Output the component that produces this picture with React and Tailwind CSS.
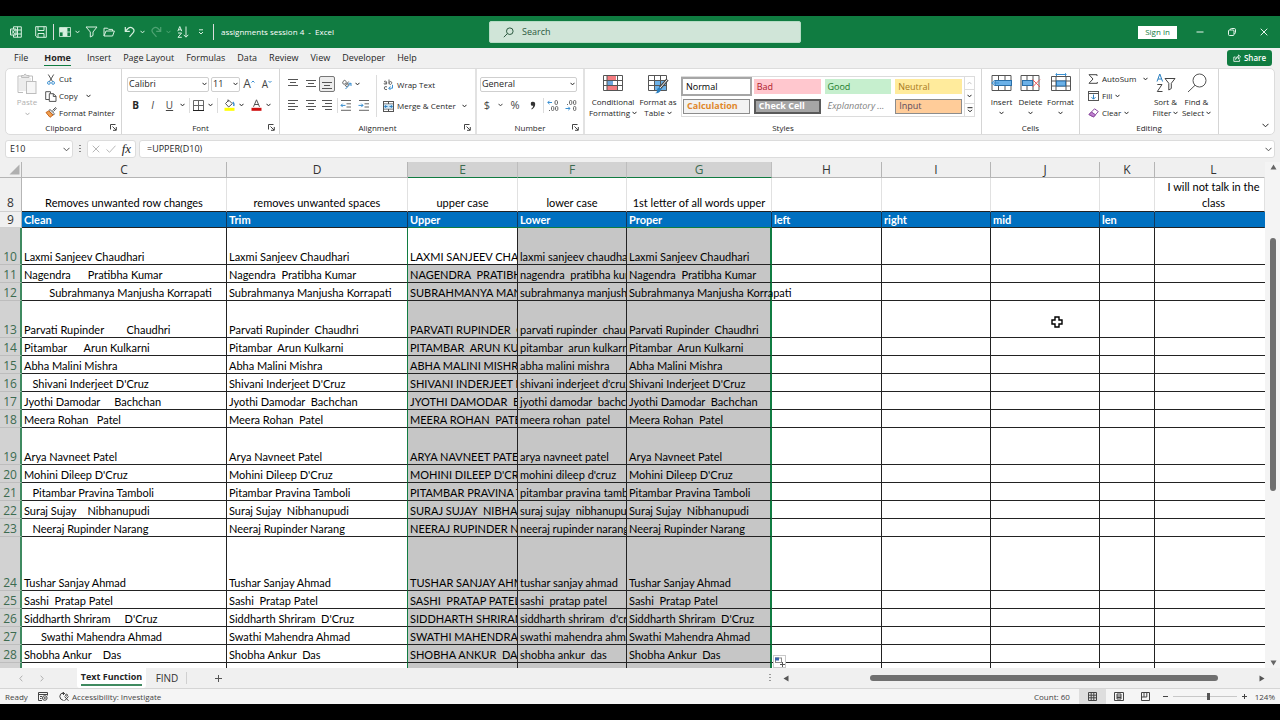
import React, { useState } from 'react';
import clsx from 'clsx';

// Column layout, the last one takes whatever is left
const columns = [
  { id: 'C', width: 'w-[205px]', title: 'Clean', note: 'Removes unwanted row changes' },
  { id: 'D', width: 'w-[181px]', title: 'Trim', note: 'removes unwanted spaces' },
  { id: 'E', width: 'w-[110px]', title: 'Upper', note: 'upper case' },
  { id: 'F', width: 'w-[109px]', title: 'Lower', note: 'lower case' },
  { id: 'G', width: 'w-[145px]', title: 'Proper', note: '1st letter of all words upper' },
  { id: 'H', width: 'w-[110px]', title: 'left', note: '' },
  { id: 'I', width: 'w-[109px]', title: 'right', note: '' },
  { id: 'J', width: 'w-[109px]', title: 'mid', note: '' },
  { id: 'K', width: 'w-[55px]', title: 'len', note: '' },
  { id: 'L', width: '', title: '', note: 'I will not talk in the class' },
];

const rows = [
  { n: 10, h: 'h-[37px]', clean: 'Laxmi Sanjeev Chaudhari', trim: 'Laxmi Sanjeev Chaudhari' },
  { n: 11, h: 'h-[18px]', clean: 'Nagendra      Pratibha Kumar', trim: 'Nagendra  Pratibha Kumar' },
  { n: 12, h: 'h-[18px]', clean: '         Subrahmanya Manjusha Korrapati', trim: 'Subrahmanya Manjusha Korrapati' },
  { n: 13, h: 'h-[37px]', clean: 'Parvati Rupinder        Chaudhri', trim: 'Parvati Rupinder  Chaudhri' },
  { n: 14, h: 'h-[18px]', clean: 'Pitambar      Arun Kulkarni', trim: 'Pitambar  Arun Kulkarni' },
  { n: 15, h: 'h-[18px]', clean: 'Abha Malini Mishra', trim: 'Abha Malini Mishra' },
  { n: 16, h: 'h-[18px]', clean: "   Shivani Inderjeet D'Cruz", trim: "Shivani Inderjeet D'Cruz" },
  { n: 17, h: 'h-[18px]', clean: 'Jyothi Damodar     Bachchan', trim: 'Jyothi Damodar  Bachchan' },
  { n: 18, h: 'h-[18px]', clean: 'Meera Rohan   Patel', trim: 'Meera Rohan  Patel' },
  { n: 19, h: 'h-[37px]', clean: 'Arya Navneet Patel', trim: 'Arya Navneet Patel' },
  { n: 20, h: 'h-[18px]', clean: "Mohini Dileep D'Cruz", trim: "Mohini Dileep D'Cruz" },
  { n: 21, h: 'h-[18px]', clean: '   Pitambar Pravina Tamboli', trim: 'Pitambar Pravina Tamboli' },
  { n: 22, h: 'h-[18px]', clean: 'Suraj Sujay    Nibhanupudi', trim: 'Suraj Sujay  Nibhanupudi' },
  { n: 23, h: 'h-[18px]', clean: '   Neeraj Rupinder Narang', trim: 'Neeraj Rupinder Narang' },
  { n: 24, h: 'h-[54px]', clean: 'Tushar Sanjay Ahmad', trim: 'Tushar Sanjay Ahmad' },
  { n: 25, h: 'h-[18px]', clean: 'Sashi  Pratap Patel', trim: 'Sashi  Pratap Patel' },
  { n: 26, h: 'h-[18px]', clean: "Siddharth Shriram     D'Cruz", trim: "Siddharth Shriram  D'Cruz" },
  { n: 27, h: 'h-[18px]', clean: '      Swathi Mahendra Ahmad', trim: 'Swathi Mahendra Ahmad' },
  { n: 28, h: 'h-[18px]', clean: 'Shobha Ankur    Das', trim: 'Shobha Ankur  Das' },
  { n: '', h: 'h-[18px]', clean: '', trim: '' },
];

const menuTabs = ['File', 'Home', 'Insert', 'Page Layout', 'Formulas', 'Data', 'Review', 'View', 'Developer', 'Help'];

const cellStyles = [
  { name: 'Normal', cls: 'bg-white text-black outline-2 outline-[#a6a6a6]' },
  { name: 'Bad', cls: 'bg-[#ffc7ce] text-[#b0182a]' },
  { name: 'Good', cls: 'bg-[#c6efce] text-[#1b7a2a]' },
  { name: 'Neutral', cls: 'bg-[#ffeb9c] text-[#a97a1c]' },
  { name: 'Calculation', cls: 'bg-[#f2f2f2] text-[#e0882c] font-bold border border-[#8c8c8c]' },
  { name: 'Check Cell', cls: 'bg-[#a5a5a5] text-white font-bold border-2 border-[#5a5a5a]' },
  { name: 'Explanatory ...', cls: 'bg-white text-[#7f7f7f] italic' },
  { name: 'Input', cls: 'bg-[#ffcc99] text-[#5b4a5e] border border-[#8c8c8c]' },
];

// Basic line icon
const Icon = ({ w = 12, h = w, children, className = '', sw = 1 }) => (
  <svg
    width={w}
    height={h}
    viewBox={`0 0 ${w} ${h}`}
    fill="none"
    stroke="currentColor"
    strokeWidth={sw}
    className={clsx('shrink-0', className)}
    aria-hidden="true"
  >
    {children}
  </svg>
);

const Chevron = ({ className = '' }) => (
  <Icon w={5} h={4} className={className}>
    <path d="M.5 .8 2.5 2.9 4.5 .8" />
  </Icon>
);

const Divider = ({ className = '' }) => <span className={clsx('w-px shrink-0 bg-[#dcdcdc]', className)} />;

const ToolButton = ({ label, className = '', children }) => (
  <button type="button" aria-label={label} className={clsx('flex h-4 shrink-0 items-center justify-center', className)}>
    {children}
  </button>
);

// Lines used by all the alignment buttons
const Lines = ({ rows: lines }) => (
  <Icon w={12} h={12} className="text-[#555]">
    {lines.map(([x1, x2, y]) => (
      <path key={y} d={`M${x1} ${y}H${x2}`} />
    ))}
  </Icon>
);

const Group = ({ title, className, launcher, children }) => (
  <section className={clsx('flex shrink-0 flex-col', className)}>
    <div className="flex h-[52px]">{children}</div>
    <div className="flex h-[13px] items-center">
      <span className="w-4" />
      <span className="flex-1 text-center text-[8px] leading-3">{title}</span>
      <span className="flex w-4 justify-center">
        {launcher && (
          <button type="button" aria-label={`${title} settings`}>
            <Icon w={7} className="text-[#444]">
              <path d="M.5 5.5V.5H5.5M2.5 2.5 6 6M6.3 3V6.3H3" />
            </Icon>
          </button>
        )}
      </span>
    </div>
  </section>
);

const TitleBar = () => (
  <header className="flex h-8 shrink-0 items-center bg-[#107c41] text-[#d8f0e0]">
    <div className="flex w-[489px] shrink-0 items-center">
      <div className="flex w-[32px] justify-center">
        <Icon w={12}>
          <path d="M3.5 3V.8H11.3V11.2H3.5V9M7.5 .8V11.2M3.5 4H11.3M3.5 8H11.3" />
          <path d="M.5 3H6V9H.5ZM2 4.3 4.6 7.7M4.6 4.3 2 7.7" />
        </Icon>
      </div>
      <ToolButton label="Save" className="ml-[2px] w-[14px]">
        <Icon w={12}>
          <path d="M.7 .7H11.3V11.3H2L.7 10ZM3 .7V4.5H9V.7M3 11.3V7.5H9V11.3" />
        </Icon>
      </ToolButton>
      <Divider className="ml-[5px] h-4 bg-[#6db78b]" />
      <ToolButton label="Quick layout" className="ml-1 w-[22px] gap-1">
        <Icon w={12}>
          <path d="M.5 1.5H11.5V10.5H.5ZM4 1.5V10.5M8 1.5V10.5M.5 6H11.5" strokeWidth=".8" />
          <path d="M4.5 2H7.5V5.5H4.5ZM1 2H3.5V5.5H1ZM4.5 6.5H7.5V10H4.5Z" fill="currentColor" />
        </Icon>
        <Chevron />
      </ToolButton>
      <ToolButton label="Filter" className="ml-[3px] w-4">
        <Icon w={13} h={12}>
          <path d="M1 1H12L8 6V9.5L5.3 11V6Z" />
        </Icon>
      </ToolButton>
      <ToolButton label="Open" className="ml-[3px] w-[14px]">
        <Icon w={12} h={10}>
          <path d="M1 9V1.2H4.5L5.7 2.4H9.5V4M1 9 3 4H11.4L9.6 9Z" />
        </Icon>
      </ToolButton>
      <ToolButton label="Undo" className="ml-[6px] w-[24px] gap-1">
        <Icon w={12} h={12} sw={1.2}>
          <path d="M1.3 1V5.3H5.8M1.3 5.2 4 2.5C7-.2 11.5 3 9.4 6.4L5.5 10.8" />
        </Icon>
        <Chevron />
      </ToolButton>
      <ToolButton label="Redo" className="ml-[3px] w-[23px] gap-1 text-[#4fa373]">
        <Icon w={12} h={12} sw={1.2}>
          <path d="M10.7 1V5.3H6.2M10.7 5.2 8 2.5C5-.2.5 3 2.6 6.4L6.5 10.8" />
        </Icon>
        <Chevron />
      </ToolButton>
      <ToolButton label="Sort" className="ml-[3px] w-4">
        <Icon w={12} h={12}>
          <path d="M.8 5.2 2.8 .5 4.8 5.2M1.5 3.8H4.2M1 7H4.6L1 11.3H4.8M9 .5V11M6.7 8.8 9 11.2 11.3 8.8" />
        </Icon>
      </ToolButton>
      <ToolButton label="Customize toolbar" className="ml-[2px] w-4">
        <Icon w={6} h={6}>
          <path d="M1 .8H5M1 3 3 5 5 3" />
        </Icon>
      </ToolButton>
      <Divider className="ml-1 h-4 bg-[#6db78b]" />
      <span className="ml-[7px] whitespace-pre text-[8px] text-white">assignments session 4  -  Excel</span>
    </div>
    <label className="flex h-[22px] w-[312px] items-center rounded-[2px] border border-[#b5dcc4] bg-[#d0e5d8] pl-[13px] text-[#2c5a40]">
      <Icon w={11}>
        <circle cx="6.8" cy="4.2" r="3.3" />
        <path d="M4.4 6.6 .8 10.2" />
      </Icon>
      <input
        aria-label="Search"
        placeholder="Search"
        className="ml-2 min-w-0 flex-1 bg-transparent text-[9px] outline-none placeholder:text-[#2c5a40]"
      />
    </label>
    <button type="button" className="ml-auto h-[13px] w-[39px] bg-white text-[8px] leading-3 text-[#107c41]">
      Sign in
    </button>
    <div className="flex text-[#e6f5ec]">
      <ToolButton label="Minimize" className="ml-[7px] w-8">
        <Icon w={8}>
          <path d="M.5 4H7.5" />
        </Icon>
      </ToolButton>
      <ToolButton label="Restore" className="w-8">
        <Icon w={8}>
          <rect x=".5" y="2" width="5.5" height="5.5" rx="1" />
          <path d="M2.3 2V1.5Q2.3.5 3.5.5H6.3Q7.5.5 7.5 1.7V4.5Q7.5 5.7 6.3 5.7" />
        </Icon>
      </ToolButton>
      <ToolButton label="Close" className="w-8">
        <Icon w={8}>
          <path d="M.7.7 7.3 7.3M7.3.7.7 7.3" />
        </Icon>
      </ToolButton>
    </div>
  </header>
);

const MenuBar = () => (
  <nav className="flex h-5 shrink-0 items-center pl-[14px] pr-[8px]">
    <div className="flex gap-3 text-[9px]">
      {menuTabs.map((tab) => (
        <button
          key={tab}
          type="button"
          className={clsx('h-4 border-b leading-4', tab === 'Home' ? 'mx-1 border-[#107c41] font-bold' : 'border-transparent')}
        >
          {tab}
        </button>
      ))}
    </div>
    <button
      type="button"
      className="ml-auto flex h-4 w-[45px] items-center justify-center gap-[3px] rounded-[3px] bg-[#107c41] text-[8px] font-semibold text-white"
    >
      <Icon w={8}>
        <path d="M2.5 3H.8V7.4H6.6V5.5M2.6 5.5C2.6 3.5 4 2.4 5.5 2.4V.8L7.6 3 5.5 5V3.5C4.2 3.5 3.2 4 2.6 5.5Z" strokeWidth=".8" />
      </Icon>
      Share
    </button>
  </nav>
);

const ClipboardGroup = () => (
  <Group title="Clipboard" launcher className="w-[115px]">
    <button type="button" className="ml-[9px] flex w-[24px] flex-col items-center pt-1 text-[8px] leading-3 text-[#b0b0b0]">
      <Icon w={20} h={22}>
        <path d="M6 19.5H1V3H4.5M12 3H15.5V8" fill="none" stroke="#bdbdbd" />
        <path d="M4.5 4.5V2.5H6.5Q8 -.5 9.8 2.5H12V4.5Z" fill="#e2e2e2" stroke="#bdbdbd" />
        <path d="M2 5H14V8H9V18H2Z" fill="#ececec" stroke="none" />
        <rect x="9.5" y="8.5" width="9.5" height="12" fill="#f6f6f6" stroke="#bdbdbd" />
      </Icon>
      <span className="mt-px">Paste</span>
      <Chevron className="mt-1" />
    </button>
    <div className="ml-[6px] flex flex-col pt-[2px] text-[8px]">
      <button type="button" className="flex h-[17px] items-center gap-[2px]">
        <span className="flex w-3 justify-center">
          <Icon w={8} h={11}>
            <path d="M1.3 .5 5.5 7.5M6.7 .5 2.5 7.5" stroke="#555" />
            <circle cx="1.9" cy="8.9" r="1.4" stroke="#3a8fd0" />
            <circle cx="6.1" cy="8.9" r="1.4" stroke="#3a8fd0" />
          </Icon>
        </span>
        Cut
      </button>
      <button type="button" className="flex h-[17px] items-center gap-[2px]">
        <span className="flex w-3 justify-center">
          <Icon w={12} h={11} className="text-[#555]">
            <path d="M4 8.5H.7V.7H5.5V2.4M4.3 2.7H8.5L11 5.2V10.4H4.3ZM8.3 2.7V5.5H11" />
          </Icon>
        </span>
        Copy
        <Chevron className="ml-[6px]" />
      </button>
      <button type="button" className="flex h-[17px] items-center gap-[2px] whitespace-nowrap">
        <span className="flex w-3 justify-center">
          <Icon w={12} h={11}>
            <path d="M7.5 3.5 10.5 .5 11.3 1.3 8.5 4.5" stroke="#555" />
            <path d="M5 2.5 9.5 6.8 8.3 8 3.8 3.7Z" fill="#fff" stroke="#555" />
            <path d="M3.8 4 1 5.5 5 10.3 8 8Z" fill="#f0a050" stroke="#c8651b" />
          </Icon>
        </span>
        Format Painter
      </button>
    </div>
  </Group>
);

const FontGroup = () => (
  <Group title="Font" launcher className="w-[158px] border-l border-[#d5d5d5]">
    <div className="flex flex-col pl-[5px]">
      <div className="flex h-[30px] items-center">
        <Dropdown label="Font name" value="Calibri" className="w-[82px]" />
        <Dropdown label="Font size" value="11" className="ml-[2px] w-[29px]" />
        <ToolButton label="Grow font" className="ml-[2px] w-[14px] text-[12px] text-[#444]">
          A
          <Icon w={4} h={8} className="text-[#3a8fd0]">
            <path d="M.5 2.5 2 1 3.5 2.5" />
          </Icon>
        </ToolButton>
        <ToolButton label="Shrink font" className="ml-1 w-[14px] text-[10px] text-[#444]">
          A
          <Icon w={4} h={8} className="text-[#3a8fd0]">
            <path d="M.5 1 2 2.5 3.5 1" />
          </Icon>
        </ToolButton>
      </div>
      <div className="flex h-3 items-center text-[10px]">
        <ToolButton label="Bold" className="w-[17px] font-bold">B</ToolButton>
        <ToolButton label="Italic" className="w-[17px] italic text-[#444]">I</ToolButton>
        <ToolButton label="Underline" className="w-[17px] text-[#444] underline">U</ToolButton>
        <Chevron className="ml-[2px]" />
        <Divider className="ml-1 h-[15px]" />
        <ToolButton label="Borders" className="ml-[2px] w-3">
          <Icon w={11} className="text-[#666]">
            <path d="M.5 .5H10.5V10.5H.5ZM5.5 .5V10.5M.5 5.5H10.5" />
            <path d="M0 10.5H11" stroke="#222" />
          </Icon>
        </ToolButton>
        <Chevron className="ml-1" />
        <Divider className="ml-1 h-[15px]" />
        <ToolButton label="Fill color" className="ml-[5px] w-3">
          <Icon w={11} h={12}>
            <path d="M1.5 4.5 4.8 1.2 8.3 4.7 4.7 8 1.5 4.5Z M4 .5V3" stroke="#555" />
            <path d="M8.8 3Q10.6 5 9.6 7" stroke="#3a8fd0" strokeWidth="1.4" />
            <path d="M.5 10.3H10.5" stroke="#ffff00" strokeWidth="3" />
          </Icon>
        </ToolButton>
        <Chevron className="ml-1" />
        <ToolButton label="Font color" className="ml-[6px] w-3">
          <Icon w={11} h={12}>
            <path d="M2.5 7.8 5.5 .8 8.5 7.8M3.6 5.5H7.4" stroke="#555" />
            <path d="M.5 10.3H10.5" stroke="#d01010" strokeWidth="3" />
          </Icon>
        </ToolButton>
        <Chevron className="ml-1" />
      </div>
    </div>
  </Group>
);

const Dropdown = ({ label, value, className }) => (
  <span className={clsx('flex h-[15px] items-center rounded-[2px] border border-[#cfcfcf] bg-white pl-px pr-px', className)}>
    <select aria-label={label} className="min-w-0 flex-1 appearance-none bg-transparent text-[9px] leading-3 outline-none">
      <option>{value}</option>
    </select>
    <Chevron />
  </span>
);

const AlignmentGroup = () => (
  <Group title="Alignment" launcher className="w-[196px] border-l border-[#d5d5d5]">
    <div className="flex flex-col pl-[4px]">
      <div className="flex h-[30px] items-center">
        <ToolButton label="Top align" className="w-[18px]">
          <Lines rows={[[1, 11, 1.5], [3, 9, 4.5], [1, 11, 7.5]]} />
        </ToolButton>
        <ToolButton label="Middle align" className="w-[17px]">
          <Lines rows={[[1, 11, 2.5], [3, 9, 5.5], [1, 11, 8.5]]} />
        </ToolButton>
        <ToolButton label="Bottom align" className="w-4 rounded-[2px] border border-[#777] bg-[#ededed]">
          <Lines rows={[[1, 11, 4.5], [3, 9, 7.5], [1, 11, 10.5]]} />
        </ToolButton>
        <ToolButton label="Orientation" className="ml-[5px] w-3">
          <Icon w={11}>
            <path d="M2 2.5Q4-.3 5 2.5T2.5 5.2Q1 4 2 2.5M4 7 7.7 2.5M5.5 5Q8 4 7.3 6.3T4.6 7" stroke="#666" />
            <path d="M4.5 10 10 4.3M7.5 4.3H10V7" stroke="#3a8fd0" />
          </Icon>
        </ToolButton>
        <Chevron className="ml-[3px]" />
      </div>
      <div className="flex h-3 items-center">
        <ToolButton label="Align left" className="w-[18px]">
          <Lines rows={[[1, 11, 1.5], [1, 8, 4.5], [1, 11, 7.5], [1, 8, 10.5]]} />
        </ToolButton>
        <ToolButton label="Center" className="w-[17px]">
          <Lines rows={[[1, 11, 1.5], [3, 9, 4.5], [1, 11, 7.5], [3, 9, 10.5]]} />
        </ToolButton>
        <ToolButton label="Align right" className="w-4">
          <Lines rows={[[1, 11, 1.5], [4, 11, 4.5], [1, 11, 7.5], [4, 11, 10.5]]} />
        </ToolButton>
        <Divider className="ml-[2px] h-[15px]" />
        <ToolButton label="Decrease indent" className="ml-[2px] w-3">
          <Icon w={12} h={11} className="text-[#666]">
            <path d="M1 .5H11M6.5 3.8H11M6.5 7H11M1 10.3H11" />
            <path d="M5.5 5.4H1M2.7 3.7 1 5.4 2.7 7.1" stroke="#3a8fd0" />
          </Icon>
        </ToolButton>
        <ToolButton label="Increase indent" className="ml-[6px] w-3">
          <Icon w={12} h={11} className="text-[#666]">
            <path d="M1 .5H11M6.5 3.8H11M6.5 7H11M1 10.3H11" />
            <path d="M.5 5.4H5M3.3 3.7 5 5.4 3.3 7.1" stroke="#3a8fd0" />
          </Icon>
        </ToolButton>
      </div>
    </div>
    <Divider className="ml-[6px] mt-[6px] h-[42px]" />
    <div className="flex flex-col pl-[6px] text-[8px]">
      <button type="button" className="flex h-[31px] items-center gap-[3px] whitespace-nowrap">
        <Icon w={11} h={12}>
          <path d="M1 2.5Q3 1.3 3.6 3V5.2M3.6 4Q1 3.6 1 4.6T3.6 4.8M6 .5V5.2M6 3.8Q6.3 2.3 7.8 2.6T8.6 4.6 6 4.6M4 7.8Q1.2 7 1.2 9T4 10.6" stroke="#666" />
          <path d="M9.5 5.8V9.2H5.8M7.5 7.4 5.7 9.2 7.5 11" stroke="#3a8fd0" />
        </Icon>
        Wrap Text
      </button>
      <button type="button" className="flex h-3 items-center gap-[3px] whitespace-nowrap">
        <Icon w={11}>
          <rect x=".5" y=".5" width="10" height="10" stroke="#555" />
          <path d="M.5 3H10.5M.5 8H10.5M5.5 .5V3M5.5 8V10.5" stroke="#555" />
          <rect x="1" y="3.4" width="9" height="4.2" fill="#cde6f7" stroke="none" />
          <path d="M1.5 5.5H4.5M3.2 4.2 1.7 5.5 3.2 6.8M9.5 5.5H6.5M7.8 4.2 9.3 5.5 7.8 6.8" stroke="#2a7fc0" />
        </Icon>
        Merge &amp; Center
        <Chevron className="ml-[3px]" />
      </button>
    </div>
  </Group>
);

const NumberGroup = () => (
  <Group title="Number" launcher className="w-[108px] border-l-2 border-[#e2e2e2]">
    <div className="flex flex-col pl-[3px]">
      <div className="flex h-[30px] items-center">
        <Dropdown label="Number format" value="General" className="w-[97px]" />
      </div>
      <div className="flex h-3 items-center text-[11px] text-[#444]">
        <ToolButton label="Currency" className="w-[14px]">$</ToolButton>
        <Chevron className="ml-1" />
        <ToolButton label="Percent" className="ml-[5px] w-[14px]">%</ToolButton>
        <ToolButton label="Comma style" className="ml-[5px] w-3">
          <Icon w={6} h={9}>
            <path d="M3 .8A2 2 0 1 0 3.3 4.7Q3 6.7 1.3 7.7L1.8 8.4Q5.3 6.5 5.2 2.8A2.1 2.1 0 0 0 3 .8Z" fill="#333" stroke="none" />
          </Icon>
        </ToolButton>
        <Divider className="ml-1 h-[15px]" />
        <ToolButton label="Increase decimal" className="ml-[3px] w-3">
          <Icon w={12} h={11}>
            <path d="M5 2.5H.8M2.5.8.8 2.5 2.5 4.2" stroke="#3a8fd0" />
            <rect x="8" y=".5" width="2.5" height="4" rx="1.2" stroke="#666" />
            <rect x="4.5" y="6.5" width="2.3" height="4" rx="1.1" stroke="#666" />
            <rect x="8.5" y="6.5" width="2.3" height="4" rx="1.1" stroke="#666" />
            <path d="M2 10.5H3" stroke="#666" />
          </Icon>
        </ToolButton>
        <ToolButton label="Decrease decimal" className="ml-[6px] w-3">
          <Icon w={12} h={11}>
            <path d="M.5 8.5H5M3.3 6.8 5 8.5 3.3 10.2" stroke="#3a8fd0" />
            <rect x="4.5" y=".5" width="2.3" height="4" rx="1.1" stroke="#666" />
            <rect x="8.5" y=".5" width="2.3" height="4" rx="1.1" stroke="#666" />
            <rect x="8.5" y="6.5" width="2.3" height="4" rx="1.1" stroke="#666" />
            <path d="M2 4.5H3" stroke="#666" />
          </Icon>
        </ToolButton>
      </div>
    </div>
  </Group>
);

// Tall ribbon button: picture, text and a chevron after or under the text
const BigButton = ({ lines, below, className, children }) => (
  <button type="button" className={clsx('flex flex-col items-center whitespace-nowrap pt-[6px] text-[8px] leading-[11px]', className)}>
    <span className="flex h-[21px] items-start">{children}</span>
    <span>{lines[0]}</span>
    {below ? (
      <Chevron className="mt-1" />
    ) : (
      <span className="flex items-center gap-[2px]">
        {lines[1]}
        <Chevron />
      </span>
    )}
  </button>
);

const StylesGroup = () => (
  <Group title="Styles" className="w-[398px] border-l-2 border-[#e2e2e2]">
    <BigButton lines={['Conditional', 'Formatting']} className="ml-1 w-[48px]">
      <Icon w={20} h={17}>
        <rect x="4" y=".5" width="9" height="5" fill="#f47c80" stroke="none" />
        <rect x="4" y="5.5" width="6" height="5" fill="#6ea6dc" stroke="none" />
        <rect x="4" y="10.5" width="11" height="5" fill="#f47c80" stroke="none" />
        <path d="M.5 .5H19.5V15.5H.5ZM4 .5V15.5M14.5 .5V15.5M.5 5.5H19.5M.5 10.5H19.5" stroke="#555" />
      </Icon>
    </BigButton>
    <BigButton lines={['Format as', 'Table']} className="w-[42px]">
      <Icon w={21} h={19}>
        <rect x="7" y="5" width="12" height="11" fill="#6bb1e8" stroke="none" />
        <path d="M.5 .5H18.5V15.5H.5ZM6.5 .5V15.5M12.5 .5V15.5M.5 5.5H18.5M.5 10.5H18.5" stroke="#555" />
        <path d="M19.5 4.5 12 13" stroke="#444" strokeWidth="3" />
        <path d="M19.5 4.5 12 13" stroke="#fff" />
        <path d="M12 12.5Q9 12.5 9 15.5T6.5 18Q12 19 13.5 14Z" fill="#2a7fc0" stroke="none" />
      </Icon>
    </BigButton>
    <div className="ml-[2px] mt-[7px] flex h-[41px] w-[294px] border border-[#dcdcdc]">
      <div className="grid flex-1 grid-cols-4 gap-x-1 gap-y-[4px] p-[2px] pl-px">
        {cellStyles.map((s) => (
          <button key={s.name} type="button" className={clsx('flex h-[15px] items-center overflow-hidden whitespace-nowrap pl-[3px] text-[9px]', s.cls)}>
            {s.name}
          </button>
        ))}
      </div>
      <div className="flex w-[10px] flex-col divide-y divide-[#dcdcdc] border-l border-[#dcdcdc]">
        <button type="button" aria-label="Previous styles" className="flex flex-1 items-center justify-center text-[#c4c4c4]">
          <Chevron className="rotate-180" />
        </button>
        <button type="button" aria-label="Next styles" className="flex flex-1 items-center justify-center">
          <Chevron />
        </button>
        <button type="button" aria-label="All styles" className="flex flex-1 items-center justify-center">
          <Icon w={6} h={6}>
            <path d="M.5 .7H5.5M1 2.8 3 4.8 5 2.8" />
          </Icon>
        </button>
      </div>
    </div>
  </Group>
);

const CellsGroup = () => (
  <Group title="Cells" className="w-[98px] border-l border-[#d5d5d5]">
    <BigButton below lines={['Insert']} className="ml-[5px] w-[29px]">
      <Icon w={21} h={17}>
        <path d="M1 .5H20V15.5H1ZM7.5 .5V15.5M14 .5V15.5" stroke="#555" />
        <rect x="4" y="5.5" width="16.5" height="5" fill="#6bb1e8" stroke="#2a6fa8" />
        <path d="M8 8H.8M3.8 5 .8 8 3.8 11" stroke="#3a8fd0" />
      </Icon>
    </BigButton>
    <BigButton below lines={['Delete']} className="w-[29px]">
      <Icon w={21} h={17}>
        <path d="M1 .5H19V15.5H1ZM7 .5V15.5M13 .5V15.5" stroke="#555" />
        <rect x="2.5" y="5.5" width="10" height="5" fill="#6bb1e8" stroke="#2a6fa8" />
        <path d="M12.5 4.5 20 12M20 4.5 12.5 12" stroke="#e8585c" />
      </Icon>
    </BigButton>
    <BigButton below lines={['Format']} className="w-[31px]">
      <Icon w={20} h={19} className="-mt-[2px]">
        <path d="M4.5 1.5H15.5M5.5 .2V3M14.5 .2V3" stroke="#3a8fd0" />
        <path d="M.5 3.5H19.5V17.5H.5ZM5 3.5V17.5M15 3.5V17.5M.5 8H19.5M.5 13H19.5" stroke="#555" />
        <rect x="5.5" y="8" width="9" height="5" fill="#6bb1e8" stroke="#2a6fa8" />
      </Icon>
    </BigButton>
  </Group>
);

const EditingGroup = () => (
  <Group title="Editing" className="w-[139px] border-l border-[#d5d5d5]">
    <div className="ml-[8px] flex w-[60px] flex-col pt-[2px] text-[8px]">
      <button type="button" className="flex h-[17px] items-center gap-1">
        <Icon w={10} className="text-[#444]">
          <path d="M9 2V.7H1L5 5 1 9.3H9.3V8" />
        </Icon>
        AutoSum
        <Chevron className="ml-auto" />
      </button>
      <button type="button" className="flex h-[17px] items-center gap-[3px]">
        <Icon w={11} h={10}>
          <rect x=".5" y=".5" width="10" height="9" stroke="#555" />
          <path d="M.5 2.5H10.5" stroke="#555" />
          <path d="M5.5 3.5V8M3.5 6.2 5.5 8.2 7.5 6.2" stroke="#2a7fc0" />
        </Icon>
        Fill
        <Chevron />
      </button>
      <button type="button" className="flex h-[17px] items-center gap-[3px]">
        <Icon w={11} h={10}>
          <path d="M6.5 .8 10.3 3.5 5.5 9 1 6.5Z" fill="#fff" stroke="#8a4a9e" />
          <path d="M3.5 4 7.5 6.8 5.5 9 1 6.5Z" fill="#c07fd0" stroke="#8a4a9e" />
        </Icon>
        Clear
        <Chevron />
      </button>
    </div>
    <BigButton lines={['Sort &', 'Filter']} className="ml-[2px] w-[31px]">
      <Icon w={20} h={20} className="-mt-[2px]">
        <path d="M1 8.5 3.8 1 6.6 8.5M2 6H5.6" stroke="#2a7fc0" />
        <path d="M1.3 11.5H6L1.3 18.5H6.5M9 5.5H19L15.3 10.3V15.5L12.8 17V10.3Z" stroke="#444" />
      </Icon>
    </BigButton>
    <BigButton lines={['Find &', 'Select']} className="w-[31px]">
      <Icon w={20} h={20} className="-mt-[2px]">
        <circle cx="12.5" cy="7.5" r="6.5" stroke="#555" />
        <path d="M8 12.3 1 19" stroke="#555" />
      </Icon>
    </BigButton>
  </Group>
);

const Ribbon = () => (
  <div className="mx-[5px] flex shrink-0 rounded-[5px] border border-[#dcdcdc] bg-white">
    <ClipboardGroup />
    <FontGroup />
    <AlignmentGroup />
    <NumberGroup />
    <StylesGroup />
    <CellsGroup />
    <EditingGroup />
    <div className="flex flex-1 items-end justify-end border-l border-[#d5d5d5] pb-[6px] pr-[5px]">
      <button type="button" aria-label="Collapse ribbon">
        <Icon w={7} h={5}>
          <path d="M.5 .8 3.5 3.8 6.5 .8" />
        </Icon>
      </button>
    </div>
  </div>
);

const FormulaBar = () => (
  <div className="mx-[5px] my-1 mt-[5px] flex h-[18px] shrink-0 items-center">
    <span className="flex h-full w-[68px] items-center rounded-[3px] border border-[#dcdcdc] bg-white pl-1 pr-[2px]">
      <input aria-label="Name box" defaultValue="E10" className="min-w-0 flex-1 bg-transparent text-[9px] outline-none" />
      <Icon w={7} h={5} className="text-[#555]">
        <path d="M.5 .8 3.5 3.8 6.5 .8" />
      </Icon>
    </span>
    <Icon w={2} h={8} className="mx-[6px] text-[#888]">
      <path d="M1 0V8" strokeDasharray="1 2" strokeWidth="2" />
    </Icon>
    <div className="flex h-full w-[49px] items-center justify-around rounded-[3px] border border-[#dcdcdc] bg-white px-px">
      <button type="button" aria-label="Cancel" className="text-[#b8b8b8]">
        <Icon w={8}>
          <path d="M.7.7 7.3 7.3M7.3.7.7 7.3" />
        </Icon>
      </button>
      <button type="button" aria-label="Enter" className="text-[#b8b8b8]">
        <Icon w={10} h={8}>
          <path d="M.5 4.5 3.5 7.3 9.5 .7" />
        </Icon>
      </button>
      <button type="button" aria-label="Insert function" className="font-['Liberation_Serif',serif] text-[13px] italic leading-4">
        fx
      </button>
    </div>
    <span className="ml-[3px] flex h-full flex-1 items-center rounded-[3px] border border-[#dcdcdc] bg-white pl-[7px] pr-[2px]">
      <input aria-label="Formula" defaultValue="=UPPER(D10)" className="min-w-0 flex-1 bg-transparent text-[9px] outline-none" />
      <Icon w={7} h={5} className="text-[#555]">
        <path d="M.5 .8 3.5 3.8 6.5 .8" />
      </Icon>
    </span>
  </div>
);

const isSelected = (id) => ['E', 'F', 'G'].includes(id);

const cellText = (row, id) => {
  switch (id) {
    case 'C':
      return row.clean;
    case 'D':
    case 'G':
      return row.trim;
    case 'E':
      return row.trim.toUpperCase();
    case 'F':
      return row.trim.toLowerCase();
    default:
      return '';
  }
};

const Grid = () => (
  <div className="relative min-w-0 flex-1 overflow-hidden bg-white">
    <table className="w-full table-fixed border-separate border-spacing-0 font-['Lato','Liberation_Sans',sans-serif] text-[11px] leading-4 text-black">
      <colgroup>
        <col className="w-[22px]" />
        {columns.map((c) => (
          <col key={c.id} className={c.width} />
        ))}
      </colgroup>
      <thead className="font-['Open_Sans','Noto_Sans',sans-serif] text-[12px] leading-[15px]">
        <tr className="h-4">
          <th className="border-b border-r border-[#b5b5b5] bg-[#f0f0f0] p-0">
            <Icon w={11} className="ml-auto mr-px">
              <path d="M10.5 .5V10.5H.5Z" fill="#b0b0b0" stroke="none" />
            </Icon>
          </th>
          {columns.map((c) => (
            <th
              key={c.id}
              scope="col"
              className={clsx(
                'border-b border-r p-0 text-center font-normal',
                isSelected(c.id)
                  ? 'border-b-[#107c41] border-r-[#bdbdbd] bg-[#d2d2d2] text-[#3c6b50]'
                  : 'border-[#b5b5b5] bg-[#f0f0f0] text-[#333]',
                c.id === 'L' && 'border-r-transparent pl-2'
              )}
            >
              {c.id}
            </th>
          ))}
        </tr>
      </thead>
      <tbody>
        <tr className="h-[34px]">
          <th scope="row" className="border-b border-r border-b-[#d0d0d0] border-r-[#b5b5b5] bg-[#f0f0f0] p-0 align-bottom font-['Open_Sans','Noto_Sans',sans-serif] text-[12px] font-normal text-[#333]">
            8
          </th>
          {columns.map((c) => (
            <td
              key={c.id}
              className={clsx(
                'border-b border-r border-b-[#222] border-r-[#e1e1e1] py-0 text-center align-bottom',
                c.id === 'L' ? 'pl-2 pr-0' : 'px-0'
              )}
            >
              {c.note}
            </td>
          ))}
        </tr>
        <tr className="h-4 leading-[15px]">
          <th scope="row" className="border-b border-r border-b-[#d0d0d0] border-r-[#b5b5b5] bg-[#f0f0f0] p-0 font-['Open_Sans','Noto_Sans',sans-serif] text-[12px] font-normal text-[#333]">
            9
          </th>
          {columns.map((c) => (
            <td
              key={c.id}
              className={clsx(
                'border-b border-r bg-[#0070c0] py-0 pl-[2px] pr-0 font-bold text-white',
                isSelected(c.id) ? 'border-b-[#107c41]' : 'border-b-[#222]',
                c.id === 'L' ? 'border-r-[#0070c0]' : 'border-r-[#123a5c]'
              )}
            >
              {c.title}
            </td>
          ))}
        </tr>
        {rows.map((row) => (
          <tr key={row.n} className={clsx('leading-[15px]', row.h)}>
            <th
              scope="row"
              className="border-b border-r-2 border-b-[#bdbdbd] border-r-[#3f8a60] bg-[#d2d2d2] p-0 align-bottom font-['Open_Sans','Noto_Sans',sans-serif] text-[12px] font-normal text-[#3c6b50]"
            >
              {row.n}
            </th>
            {columns.map((c) => (
              <td
                key={c.id}
                className={clsx(
                  'whitespace-pre border-b border-b-[#222] py-0 pl-[2px] pr-0 align-bottom',
                  c.id === 'D' || c.id === 'G' ? 'border-r-[#107c41]' : 'border-r-[#222]',
                  (c.id === 'E' || c.id === 'F') && 'overflow-hidden',
                  c.id === 'G' && 'border-r-2',
                  c.id !== 'G' && c.id !== 'L' && 'border-r',
                  isSelected(c.id) && !(row.n === 10 && c.id === 'E') && 'bg-[#c6c6c6]'
                )}
              >
                {cellText(row, c.id)}
              </td>
            ))}
          </tr>
        ))}
      </tbody>
    </table>

    {/* auto fill options, sits on the corner of the selection */}
    <button type="button" aria-label="Auto fill options" className="absolute bottom-0 left-[773px] flex size-[13px] items-center justify-center border border-[#c8c8c8] bg-white">
      <Icon w={10}>
        <rect x=".5" y="1" width="6" height="4.5" fill="#fff" stroke="#8a8a8a" />
        <rect x="0" y=".5" width="4" height="3" fill="#3b62a8" stroke="none" />
        <path d="M7.5 5V10M5 7.5H10" stroke="#555" />
      </Icon>
    </button>

    {/* mouse pointer */}
    <Icon w={12} className="absolute left-[1051px] top-[154px]">
      <path d="M4 1H8V4H11V8H8V11H4V8H1V4H4Z" fill="#fff" stroke="#000" strokeWidth="1.4" />
    </Icon>
  </div>
);

const VerticalScroll = () => (
  <div className="flex w-[15px] shrink-0 flex-col items-center bg-[#f4f4f4] py-[2px] pl-px">
    <Icon w={7} h={6}>
      <path d="M3.5 .5 6.5 5.5H.5Z" fill="#666" stroke="none" />
    </Icon>
    <div className="flex w-full flex-1 flex-col items-center pt-[68px]">
      <div className="h-[60%] w-[6px] rounded-full bg-[#707070]" />
    </div>
    <Icon w={7} h={6}>
      <path d="M3.5 5.5 6.5 .5H.5Z" fill="#666" stroke="none" />
    </Icon>
  </div>
);

const SheetTabs = () => (
  <div className="flex h-[21px] shrink-0 items-center border-b border-[#d5d5d5] bg-[#f0f0f0]">
    <div className="flex w-[77px] items-center pl-[19px] text-[#b0b0b0]">
      <button type="button" aria-label="Previous sheet">
        <Icon w={4} h={7}>
          <path d="M3.3 .7 .8 3.5 3.3 6.3" />
        </Icon>
      </button>
      <button type="button" aria-label="Next sheet" className="ml-[17px]">
        <Icon w={4} h={7}>
          <path d="M.7 .7 3.2 3.5 .7 6.3" />
        </Icon>
      </button>
    </div>
    <button type="button" className="flex h-full w-[69px] justify-center rounded-b-[3px] bg-white text-[9px] font-bold">
      <span className="h-[18px] whitespace-nowrap border-b-2 border-[#3f8a60] leading-[18px]">Text Function</span>
    </button>
    <button type="button" className="w-[41px] border-r border-[#d0d0d0] pl-[2px] text-[10px] leading-3 text-[#333]">
      FIND
    </button>
    <button type="button" aria-label="New sheet" className="ml-7">
      <Icon w={7} className="text-[#555]">
        <path d="M3.5 0V7M0 3.5H7" />
      </Icon>
    </button>
    <div className="ml-auto flex w-[511px] items-center">
      <Icon w={2} h={8} className="text-[#999]">
        <path d="M1 0V8" strokeDasharray="1 2" strokeWidth="2" />
      </Icon>
      <Icon w={6} h={7} className="ml-3">
        <path d="M5.5 .5V6.5L.5 3.5Z" fill="#555" stroke="none" />
      </Icon>
      <div className="flex flex-1 justify-end pr-[41px]">
        <div className="h-[6px] w-[348px] rounded-full bg-[#707070]" />
      </div>
      <Icon w={6} h={7} className="mr-[15px]">
        <path d="M.5 .5V6.5L5.5 3.5Z" fill="#555" stroke="none" />
      </Icon>
    </div>
  </div>
);

const StatusBar = () => {
  const [zoom, setZoom] = useState(55);
  return (
    <footer className="flex h-[15px] shrink-0 items-center bg-[#f5f5f5] pl-[5px] pr-[5px] text-[8px] text-[#444]">
      <span className="w-[33px]">Ready</span>
      <Icon w={10} h={9}>
        <path d="M.5 .5H9.5V3.5M.5 .5V8.5H4M.5 2.5H9.5M2 4.5H4M2 6.5H3.5" />
        <circle cx="6.8" cy="6" r="2.3" />
        <circle cx="6.8" cy="6" r=".6" />
      </Icon>
      <Icon w={11} h={10} className="ml-[11px]">
        <path d="M4 .8Q.8 1.5 .8 4.5T4.5 8.5M4.5 0V3M3 1.5H6M5.5 4.5 9.5 8.8M9.5 4.5 5.5 8.8" />
        <circle cx="7.5" cy="3.2" r="1" />
      </Icon>
      <span className="ml-[2px] whitespace-nowrap">Accessibility: Investigate</span>
      <span className="ml-auto w-[45px]">Count: 60</span>
      <button type="button" aria-label="Normal view" className="flex h-full w-[27px] items-center justify-center bg-[#dedede]">
        <Icon w={9}>
          <path d="M.5 .5H8.5V8.5H.5ZM3.2 .5V8.5M5.8 .5V8.5M.5 3.2H8.5M.5 5.8H8.5" />
        </Icon>
      </button>
      <button type="button" aria-label="Page layout view" className="flex h-full w-[26px] items-center justify-center">
        <Icon w={10} h={9}>
          <path d="M.5 .5H9.5V8.5H.5ZM3 2V7H7V2ZM3 4H7M3 5.5H7" />
        </Icon>
      </button>
      <button type="button" aria-label="Page break view" className="flex h-full w-[27px] items-center justify-center">
        <Icon w={9}>
          <path d="M.5 .5H8.5V8.5H.5ZM3 .5V5M5.8 .5V5M.5 5H5.8" />
        </Icon>
      </button>
      <button type="button" aria-label="Zoom out" className="ml-1">
        <Icon w={5}>
          <path d="M0 2.5H5" />
        </Icon>
      </button>
      <input
        type="range"
        aria-label="Zoom"
        value={zoom}
        onChange={(e) => setZoom(e.target.value)}
        className="mx-[5px] h-2 w-[64px] appearance-none bg-transparent [&::-webkit-slider-runnable-track]:h-px [&::-webkit-slider-runnable-track]:bg-[#c8c8c8] [&::-webkit-slider-thumb]:-mt-[3px] [&::-webkit-slider-thumb]:h-[7px] [&::-webkit-slider-thumb]:w-[3px] [&::-webkit-slider-thumb]:appearance-none [&::-webkit-slider-thumb]:bg-[#555]"
      />
      <button type="button" aria-label="Zoom in">
        <Icon w={5}>
          <path d="M0 2.5H5M2.5 0V5" />
        </Icon>
      </button>
      <span className="w-[28px] text-right">124%</span>
    </footer>
  );
};

export default function App() {
  return (
    <div className="h-screen bg-black py-4">
      <main className="flex h-full flex-col overflow-hidden bg-[#f0f0f0] font-['Open_Sans','Noto_Sans',sans-serif] text-[#262626]">
        <TitleBar />
        <MenuBar />
        <Ribbon />
        <FormulaBar />
        <div className="flex min-h-0 flex-1">
          <Grid />
          <VerticalScroll />
        </div>
        <SheetTabs />
        <StatusBar />
      </main>
    </div>
  );
}
